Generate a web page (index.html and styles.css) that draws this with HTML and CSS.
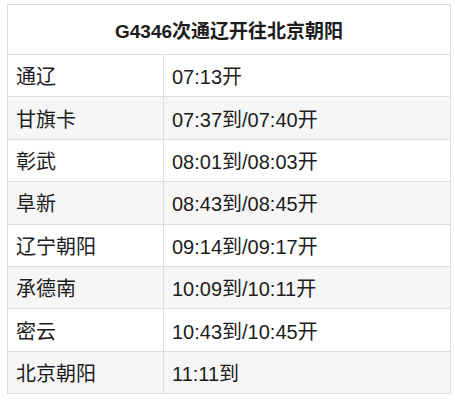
FILE: index.html
```html
<!DOCTYPE html>
<html lang="zh-CN">
<head>
<meta charset="utf-8">
<title>G4346次通辽开往北京朝阳</title>
<link rel="stylesheet" href="styles.css">
</head>
<body>
<table class="timetable">
  <colgroup>
    <col class="col-station">
    <col class="col-time">
  </colgroup>
  <thead>
    <tr class="head-row"><th colspan="2">G4346次通辽开往北京朝阳</th></tr>
  </thead>
  <tbody>
    <tr><td>通辽</td><td>07:13开</td></tr>
    <tr><td>甘旗卡</td><td>07:37到/07:40开</td></tr>
    <tr><td>彰武</td><td>08:01到/08:03开</td></tr>
    <tr><td>阜新</td><td>08:43到/08:45开</td></tr>
    <tr><td>辽宁朝阳</td><td>09:14到/09:17开</td></tr>
    <tr><td>承德南</td><td>10:09到/10:11开</td></tr>
    <tr><td>密云</td><td>10:43到/10:45开</td></tr>
    <tr><td>北京朝阳</td><td>11:11到</td></tr>
  </tbody>
</table>
</body>
</html>
```
FILE: styles.css
```css
html, body {
  margin: 0;
  padding: 0;
  background: #ffffff;
}
body {
  padding: 4px 0 0 7px;
  font-family: "Liberation Sans", "Noto Sans CJK SC", sans-serif;
  color: #1c1c1c;
}
.timetable {
  border-collapse: collapse;
  width: 443px;
  table-layout: fixed;
}
.col-station {
  width: 156px;
}
.col-time {
  width: 287px;
}
.timetable th,
.timetable td {
  border: 1px solid #dedede;
  padding: 0 0 0 8px;
  text-align: left;
  vertical-align: middle;
}
.head-row {
  height: 50px;
}
.timetable th {
  text-align: center;
  font-size: 19px;
  font-weight: bold;
  padding: 0;
}
.timetable tbody tr {
  height: 42.4px;
}
.timetable tbody tr:nth-child(even) {
  background: #f6f6f6;
}
.timetable td {
  font-size: 20px;
}
```
